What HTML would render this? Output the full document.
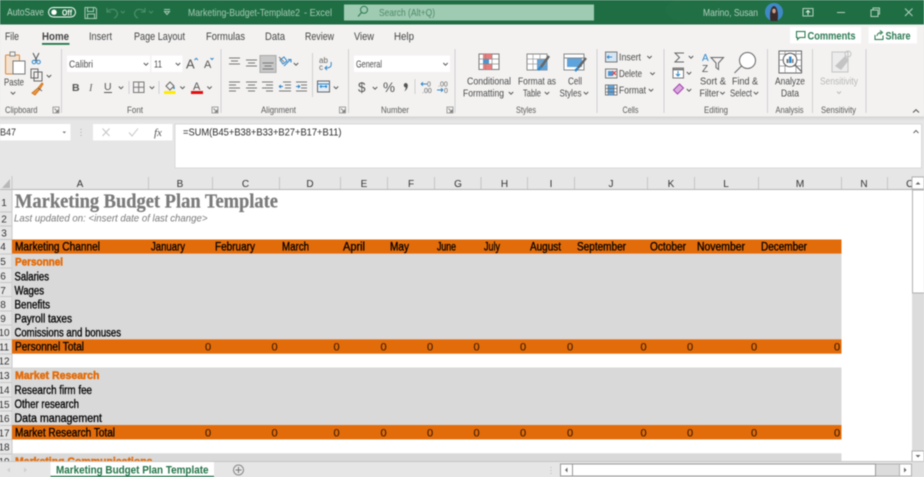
<!DOCTYPE html>
<html lang="en"><head><meta charset="utf-8"><title>Marketing Budget Plan Template</title>
<style>
html,body{margin:0;padding:0;width:924px;height:477px;overflow:hidden;background:#e6e6e6}
svg{display:block;position:absolute;left:0;top:0;filter:blur(.4px)}
text{font-family:"Liberation Sans",sans-serif;font-size:9.5px;fill:#555}
.tb{fill:#b3d0bf;font-size:10.5px}
.tab{font-size:11px;fill:#444}
.gl{font-size:9px;fill:#5a5a5a}
.r{font-size:10.5px;fill:#4a4a4a}
.cell{font-size:11.5px;fill:#000;stroke:#000;stroke-width:.3}
.z{font-size:11px;fill:#3a1c00;text-anchor:middle;stroke:#3a1c00;stroke-width:.12}
.pers{font-size:11px;font-weight:bold;fill:#e36c0a;stroke:#e36c0a;stroke-width:.5}
.ch{font-size:10px;fill:#333;text-anchor:middle}
.rh{font-size:10px;fill:#333;text-anchor:middle}
.ic{fill:none;stroke:#666;stroke-width:1}
.chev{fill:none;stroke:#555;stroke-width:1}
</style></head><body>
<svg width="924" height="477" viewBox="0 0 924 477" xmlns="http://www.w3.org/2000/svg">
<defs>
<path id="c" d="M-2.2-1 0 1.2 2.2-1" class="chev"/>
<linearGradient id="sh" x1="0" x2="0" y1="0" y2="1"><stop offset="0" stop-color="#d2d2d2"/><stop offset="1" stop-color="#e6e6e6"/></linearGradient>
<g id="lau"><path d="M0 0h6v6H0z" fill="none" stroke="#888" stroke-width=".8"/><path d="M1.5 1.5 5 5M5 2.5V5H2.5" fill="none" stroke="#666" stroke-width=".8"/></g>
</defs>

<!-- base -->
<rect width="924" height="477" fill="#e6e6e6"/>

<!-- title bar -->
<rect width="924" height="24.5" fill="#1f6e43"/>
<ellipse cx="740" cy="10" rx="75" ry="20" fill="#236f47" opacity=".6"/>
<text class="tb" x="7" y="15.5" textLength="37" lengthAdjust="spacingAndGlyphs">AutoSave</text>
<rect x="48.5" y="7.5" width="27" height="9.5" rx="4.7" fill="none" stroke="#fff" stroke-width="1"/>
<circle cx="54" cy="12.2" r="2.7" fill="#fff"/>
<text x="62" y="15.3" textLength="10" lengthAdjust="spacingAndGlyphs" style="font-size:8.5px;fill:#fff;font-weight:bold">Off</text>
<path d="M85 7.5h10l1.5 1.5v9.5H85zM87.5 7.5v4h6v-4M87.5 18.500v-4.500h7v4.500" fill="none" stroke="#a9c9b6" stroke-width="1"/>
<path d="M107 8v4h4M107 12c2-3 8-4 10 0 1 2 0 5-3 6" fill="none" stroke="#4f8f6b" stroke-width="1.100"/>
<path d="M120.800 11l2 2 2-2" fill="none" stroke="#4f8f6b"/>
<path d="M145 8v4h-4M145 12c-2-3-8-4-10 0-1 2 0 5 3 6" fill="none" stroke="#4f8f6b" stroke-width="1.100"/>
<path d="M149 11l2 2 2-2" fill="none" stroke="#4f8f6b"/>
<path d="M164 9.500h6M164.500 11.500l2.500 3 2.500-3z" fill="none" stroke="#a9c9b6"/>
<text class="tb" x="188" y="15.800" textLength="112" lengthAdjust="spacingAndGlyphs" style="fill:#a5c8b3">Marketing-Budget-Template2</text>
<text class="tb" x="304" y="15.800" textLength="28" lengthAdjust="spacingAndGlyphs" style="fill:#a5c8b3">-  Excel</text>
<rect x="344" y="4.500" width="250" height="16" fill="#9ecbb2"/>
<circle cx="364" cy="9.800" r="3.500" fill="none" stroke="#2f7a52"/>
<path d="M361.500 12.500 358 16.500" stroke="#2f7a52"/>
<text x="379" y="16" textLength="56" lengthAdjust="spacingAndGlyphs" style="font-size:10.500px;fill:#4f8a69">Search (Alt+Q)</text>
<text class="tb" x="703" y="16" textLength="55" lengthAdjust="spacingAndGlyphs">Marino, Susan</text>
<circle cx="774" cy="12" r="9" fill="#3f8ac6"/>
<path d="M770.500 21c-1-6-.5-14 3.500-15 4 1 4.500 9 3.500 15z" fill="#3a2a2a"/>
<ellipse cx="774" cy="11" rx="1.800" ry="2.400" fill="#c99f8c"/>
<rect x="803" y="8.500" width="10" height="7.500" fill="none" stroke="#b3d0bf"/>
<path d="M808 15v-4M806 12.500l2-2 2 2" fill="none" stroke="#dfeee6"/>
<path d="M837 12.500h8" stroke="#b3d0bf"/>
<path d="M871 10h7v6.500h-7zM873 10V8h6.500v6H878" fill="none" stroke="#b3d0bf"/>
<path d="M905 8.500l7.500 7.500M912.500 8.500 905 16" stroke="#b3d0bf"/>

<!-- tabs + ribbon -->
<rect y="24.500" width="924" height="92" fill="#f3f2f1"/>
<text class="tab" x="5" y="40" textLength="14" lengthAdjust="spacingAndGlyphs">File</text>
<text class="tab" x="42" y="40" textLength="27" lengthAdjust="spacingAndGlyphs" style="font-weight:bold">Home</text>
<rect x="42" y="43" width="27.500" height="1.800" fill="#217346"/>
<text class="tab" x="89" y="40" textLength="23" lengthAdjust="spacingAndGlyphs">Insert</text>
<text class="tab" x="134" y="40" textLength="51" lengthAdjust="spacingAndGlyphs">Page Layout</text>
<text class="tab" x="206" y="40" textLength="39" lengthAdjust="spacingAndGlyphs">Formulas</text>
<text class="tab" x="265" y="40" textLength="20" lengthAdjust="spacingAndGlyphs">Data</text>
<text class="tab" x="305" y="40" textLength="29" lengthAdjust="spacingAndGlyphs">Review</text>
<text class="tab" x="354" y="40" textLength="20" lengthAdjust="spacingAndGlyphs">View</text>
<text class="tab" x="394" y="40" textLength="20" lengthAdjust="spacingAndGlyphs">Help</text>

<rect x="790" y="27" width="71" height="16.500" fill="#fff"/>
<path d="M796.500 31.500h8.500v6h-5.500l-2 2v-2h-1z" fill="none" stroke="#217346"/>
<text x="807.500" y="39.500" textLength="48" lengthAdjust="spacingAndGlyphs" style="font-size:11px;font-weight:bold;fill:#2c7a52">Comments</text>
<rect x="868.500" y="27" width="48.500" height="16.500" fill="#fff"/>
<path d="M875 35v4.500h8v-4M877 36c0-2 2-3.500 4-3.500M880 30.500l2.500 2-2.500 2" fill="none" stroke="#217346"/>
<text x="885.500" y="39.500" textLength="25" lengthAdjust="spacingAndGlyphs" style="font-size:11px;font-weight:bold;fill:#2c7a52">Share</text>

<!-- separators -->
<g stroke="#cfcfcf" stroke-width="1">
<path d="M61.500 49v64M221 49v64M348.500 49v64M455 49v64M597 49v64M664 49v64M767.500 49v64M812.500 49v64M866 49v64"/>
<path d="M312.500 53v44M129 81v13M159 81v13M415 79v15"/>
</g>

<!-- clipboard -->
<rect x="5.500" y="55" width="14" height="19" rx="1" fill="#f3e2cf" stroke="#d98a3d"/>
<rect x="10" y="52" width="5" height="4" fill="#f3f2f1" stroke="#888"/>
<rect x="13" y="61" width="12" height="13" fill="#fff" stroke="#777"/>
<text x="4" y="85.500" textLength="20" lengthAdjust="spacingAndGlyphs" class="r">Paste</text>
<use href="#c" x="13" y="93"/>
<path d="M33 53l4 8M39 53l-4 8" stroke="#555" fill="none"/>
<circle cx="34" cy="62" r="1.800" fill="none" stroke="#2f86c9"/><circle cx="38.500" cy="62" r="1.800" fill="none" stroke="#2f86c9"/>
<path d="M31 69h7v9h-7zM34 72h8v9h-8z" fill="#f3f2f1" stroke="#666"/>
<use href="#c" x="49" y="76"/>
<path d="M32 93l6-5 4-5 1 1-3 5-5 6z" fill="#e79b45" stroke="#d5741a"/>
<path d="M38 88l4 3" stroke="#666"/>
<text class="gl" x="5" y="113" textLength="32.500" lengthAdjust="spacingAndGlyphs">Clipboard</text>
<use href="#lau" x="53" y="107"/>

<!-- font -->
<rect x="67" y="55.500" width="83" height="16.500" fill="#fff"/>
<rect x="151.500" y="55.500" width="31" height="16.500" fill="#fff"/>
<text x="69" y="67.500" textLength="24" lengthAdjust="spacingAndGlyphs" class="r">Calibri</text>
<text x="154" y="67.500" textLength="8" lengthAdjust="spacingAndGlyphs" class="r">11</text>
<use href="#c" x="146" y="64"/><use href="#c" x="178" y="64"/>
<text x="186" y="68.500" style="font-size:13px;fill:#555">A</text>
<path d="M194.500 60l1.700-1.700 1.700 1.700" fill="none" stroke="#2f86c9"/>
<text x="204" y="68" style="font-size:11px;fill:#555">A</text>
<path d="M210.500 58l1.500 1.500 1.500-1.500" fill="none" stroke="#2f86c9"/>
<text x="72" y="91" style="font-size:10.500px;font-weight:bold;fill:#555">B</text>
<text x="89" y="91" style="font-size:10.500px;font-style:italic;fill:#666;font-family:'Liberation Serif',serif">I</text>
<text x="104" y="90" style="font-size:10.500px;fill:#555">U</text><path d="M104 92.500h8" stroke="#555"/>
<use href="#c" x="121" y="87.500"/>
<path d="M133.500 82h10.500v10.500h-10.500zM138.700 82v10.500M133.500 87.200h10.500" fill="none" stroke="#777"/>
<use href="#c" x="152" y="87.500"/>
<path d="M170 82l4 4-4 4-4-4z" fill="none" stroke="#666"/><path d="M174 87v2" stroke="#2f86c9" stroke-width="1.500"/>
<rect x="164" y="91" width="11.500" height="3" fill="#ffeb00"/>
<use href="#c" x="182.500" y="87.500"/>
<text x="193" y="90" style="font-size:11px;fill:#555">A</text>
<rect x="191" y="91" width="12" height="3" fill="#e01010"/>
<use href="#c" x="209.500" y="87.500"/>
<text class="gl" x="127" y="113" textLength="16" lengthAdjust="spacingAndGlyphs">Font</text>
<use href="#lau" x="212" y="107"/>

<!-- alignment -->
<rect x="260" y="55.500" width="16" height="17" fill="#c8c8c8" stroke="#aaa"/>
<g stroke="#777" stroke-width="1.100" fill="none">
<path d="M229 58h11M231 61h7M229 64h11"/>
<path d="M246 60h11M248 63h7M246 66h11"/>
<path d="M262.500 63h11M264.500 66h7M262.500 69h11"/>
<path d="M229 82h11M229 85h7M229 88h11M229 91h7"/>
<path d="M246 82h11M248 85h7M246 88h11M248 91h7"/>
<path d="M262 82h11M266 85h7M262 88h11M266 91h7"/>
<path d="M283 82h8M285 85h6M285 88h6M279 91h12"/>
<path d="M296 82h11M301 85h6M301 88h6M296 91h11"/>
</g>
<path d="M279 86.500h4M279 86.500l2-1.500M279 86.500l2 1.500" stroke="#2f86c9" fill="none"/>
<path d="M296 86.500h4M300 86.500l-2-1.500M300 86.500l-2 1.500" stroke="#2f86c9" fill="none"/>
<path d="M280 60l4-3 3 4-4 3zM284 66l6-6M288 59.500h3v3" fill="none" stroke="#2f86c9"/>
<path d="M279 57l5 5" stroke="#777"/>
<use href="#c" x="296" y="64"/>
<text x="319" y="63" style="font-size:8px;fill:#666">ab</text>
<text x="319" y="70" style="font-size:8px;fill:#666">c</text>
<path d="M331 62c1 5-1 6-6 6M327 66l-2 2 2 2" stroke="#2f86c9" fill="none"/>
<rect x="317.500" y="81" width="12" height="11" fill="#e2eef7" stroke="#666"/>
<path d="M317.500 84h12M320 86.500h7M320 86.500l1.500-1.200M320 86.500l1.500 1.200M327 86.500l-1.500-1.200M327 86.500l-1.500 1.200" stroke="#2f86c9" fill="none"/>
<use href="#c" x="336" y="87.500"/>
<text class="gl" x="261" y="113" textLength="35" lengthAdjust="spacingAndGlyphs">Alignment</text>
<use href="#lau" x="339.500" y="107"/>

<!-- number -->
<rect x="354" y="55.500" width="96" height="16.500" fill="#fff"/>
<text x="356" y="67.500" textLength="26" lengthAdjust="spacingAndGlyphs" class="r">General</text>
<use href="#c" x="445.500" y="64"/>
<text x="358" y="92" style="font-size:13.500px;fill:#555">$</text>
<use href="#c" x="375" y="88"/>
<text x="383" y="92" style="font-size:13.500px;fill:#555" textLength="12" lengthAdjust="spacingAndGlyphs">%</text>
<path d="M405.500 83a2.300 2.300 0 0 1 2.300 2.500c0 2.500-1.300 4.500-3.500 6 .8-1.500 1.400-2.500 1.500-4a2.300 2.300 0 0 1-.3-4.500z" fill="#555"/>
<path d="M421 84h6M421 84l2-1.800M421 84l2 1.800" stroke="#2f86c9" fill="none"/>
<text x="427" y="86.500" style="font-size:7px;fill:#666">0</text>
<text x="422" y="93" style="font-size:7px;fill:#666">.00</text>
<text x="438" y="86.500" style="font-size:7px;fill:#666">.00</text>
<path d="M437 90h6M443 90l-2-1.800M443 90l-2 1.800" stroke="#2f86c9" fill="none"/>
<text x="444" y="93" style="font-size:7px;fill:#666">0</text>
<text class="gl" x="381" y="113" textLength="28" lengthAdjust="spacingAndGlyphs">Number</text>
<use href="#lau" x="447" y="107"/>

<!-- styles -->
<g>
<rect x="479" y="54" width="20" height="15.500" fill="#fff" stroke="#777"/>
<rect x="483" y="54" width="9" height="5" fill="#ee7b7b"/>
<rect x="483" y="59" width="6" height="5" fill="#4a94d4"/>
<rect x="483" y="64" width="9" height="5.500" fill="#ee7b7b"/>
<path d="M485.500 54v15.500M492 54v15.500M479 59h20M479 64h20" stroke="#888" stroke-width=".7" fill="none"/>
</g>
<text class="r" x="467" y="84.500" textLength="44" lengthAdjust="spacingAndGlyphs">Conditional</text>
<text class="r" x="463" y="96.500" textLength="41" lengthAdjust="spacingAndGlyphs">Formatting</text>
<use href="#c" x="511" y="93"/>
<rect x="527" y="54" width="20" height="16" fill="#fff" stroke="#888"/>
<rect x="537" y="59" width="10" height="11" fill="#5fa3dc"/>
<path d="M527 59h20M527 64h20M533 54v16M540 54v16" stroke="#999" stroke-width=".7"/>
<path d="M549 56l-8 11" stroke="#666" stroke-width="2.500"/><path d="M541 67l-3 3" stroke="#2f86c9" stroke-width="2.500"/>
<text class="r" x="518" y="84.500" textLength="38" lengthAdjust="spacingAndGlyphs">Format as</text>
<text class="r" x="523" y="96.500" textLength="18" lengthAdjust="spacingAndGlyphs">Table</text>
<use href="#c" x="547" y="93"/>
<rect x="564" y="54" width="20" height="16" fill="#fff" stroke="#888"/>
<rect x="567" y="58" width="15" height="9" fill="#5fa3dc"/>
<path d="M564 58h20" stroke="#888"/>
<path d="M586 58l-8 10" stroke="#666" stroke-width="2.500"/><path d="M578 68l-3 3" stroke="#2f86c9" stroke-width="2.500"/>
<text class="r" x="568" y="84.500" textLength="14" lengthAdjust="spacingAndGlyphs">Cell</text>
<text class="r" x="559.500" y="96.500" textLength="22" lengthAdjust="spacingAndGlyphs">Styles</text>
<use href="#c" x="586" y="93"/>
<text class="gl" x="516" y="113" textLength="20" lengthAdjust="spacingAndGlyphs">Styles</text>

<!-- cells -->
<rect x="605.500" y="52" width="11.500" height="10" fill="#d5e6f4" stroke="#777"/>
<path d="M607 57h5M607 57l2-1.500M607 57l2 1.500" stroke="#2f86c9" fill="none"/>
<text class="r" x="619" y="60.500" textLength="22" lengthAdjust="spacingAndGlyphs">Insert</text>
<use href="#c" x="649.500" y="57"/>
<rect x="605.500" y="69" width="11.500" height="9" fill="#eef0f2" stroke="#777"/>
<rect x="608" y="71" width="5" height="5" fill="#4a94d4"/>
<path d="M612.500 71l3.500 4M616 71l-3.500 4" stroke="#d93a3a"/>
<text class="r" x="619" y="77" textLength="23" lengthAdjust="spacingAndGlyphs">Delete</text>
<use href="#c" x="652.500" y="73.500"/>
<rect x="605.500" y="85" width="11.500" height="10" fill="#fff" stroke="#777"/>
<rect x="608" y="85" width="6" height="10" fill="#5fa3dc"/>
<path d="M605.500 88.500h11.500M605.500 92h11.500M608 85v10M614 85v10" stroke="#666" stroke-width=".7"/>
<text class="r" x="619" y="93.500" textLength="27" lengthAdjust="spacingAndGlyphs">Format</text>
<use href="#c" x="651" y="90"/>
<text class="gl" x="622.500" y="113" textLength="16" lengthAdjust="spacingAndGlyphs">Cells</text>

<!-- editing -->
<path d="M684 53h-9l4.500 4.500-4.500 4.500h9" fill="none" stroke="#666" stroke-width="1"/>
<use href="#c" x="691" y="57"/>
<rect x="673" y="68" width="10.500" height="10" fill="#fff" stroke="#777"/><path d="M673 69.500h10.500" stroke="#666" stroke-width="1.500"/>
<path d="M678 71v5M676 74l2 2 2-2" stroke="#2f86c9" fill="none"/>
<use href="#c" x="689" y="73"/>
<path d="M673.500 90l6-6 4 4-6 6z" fill="#d9a9dc" stroke="#a33fb0"/>
<use href="#c" x="689" y="90"/>
<text x="702" y="61" style="font-size:10px;fill:#2f86c9">A</text>
<text x="702" y="72" style="font-size:10px;fill:#555">Z</text>
<path d="M711 57.500h12.500l-5 5.500v6.500l-2.500-2V63z" fill="none" stroke="#666"/>
<text class="r" x="700" y="84.500" textLength="26" lengthAdjust="spacingAndGlyphs">Sort &amp;</text>
<text class="r" x="699.500" y="96.500" textLength="19.500" lengthAdjust="spacingAndGlyphs">Filter</text>
<use href="#c" x="722.500" y="93"/>
<circle cx="747.500" cy="60.500" r="8" fill="#fff" stroke="#666"/>
<path d="M741.500 66l-7 7" stroke="#666"/>
<text class="r" x="732" y="84.500" textLength="26" lengthAdjust="spacingAndGlyphs">Find &amp;</text>
<text class="r" x="730" y="96.500" textLength="22" lengthAdjust="spacingAndGlyphs">Select</text>
<use href="#c" x="756" y="93"/>
<text class="gl" x="704" y="113" textLength="24" lengthAdjust="spacingAndGlyphs">Editing</text>

<!-- analyze -->
<rect x="779" y="51" width="22.500" height="22" fill="#fff" stroke="#666"/>
<path d="M779 54h22.500M779 60h22.500M779 66h22.500M785 51v22M796 51v22" stroke="#888" stroke-width=".7"/>
<circle cx="790" cy="60" r="6.800" fill="#fff" stroke="#555"/>
<rect x="786.500" y="59" width="2" height="4" fill="#777"/><rect x="789" y="56.500" width="2.500" height="6.500" fill="#2f86c9"/><rect x="792" y="59" width="1.500" height="4" fill="#777"/>
<path d="M795 65l7 7" stroke="#666" stroke-width="1.200"/>
<text class="r" x="775" y="84.500" textLength="30" lengthAdjust="spacingAndGlyphs">Analyze</text>
<text class="r" x="781" y="96.500" textLength="18" lengthAdjust="spacingAndGlyphs">Data</text>
<text class="gl" x="775.500" y="113" textLength="28" lengthAdjust="spacingAndGlyphs">Analysis</text>

<!-- sensitivity -->
<path d="M832 52h16v20h-16z" fill="#ececec" stroke="#c4c4c4"/>
<path d="M835 66l10-10 4 4-8 10z" fill="#c4c4c4"/>
<circle cx="848" cy="54" r="3" fill="none" stroke="#c4c4c4"/>
<text x="820" y="84.500" textLength="38" lengthAdjust="spacingAndGlyphs" style="font-size:10.500px;fill:#b8b8b8">Sensitivity</text>
<path d="M837 91.500l2 2 2-2" fill="none" stroke="#bbb"/>
<text class="gl" x="821" y="113" textLength="35" lengthAdjust="spacingAndGlyphs">Sensitivity</text>
<path d="M913 112.500l3-2.800 3 2.800" fill="none" stroke="#555"/>

<!-- ribbon shadow -->
<rect y="116.500" width="924" height="4" fill="url(#sh)"/>

<!-- formula bar -->
<rect x="0" y="124" width="70.500" height="16.500" fill="#fff"/>
<text x="0" y="135.500" textLength="16" lengthAdjust="spacingAndGlyphs" style="font-size:10.500px;fill:#333">B47</text>
<path d="M62.500 131.500h3.500l-1.700 2z" fill="#777"/>
<path d="M81 129v.8M81 132v.8M81 135v.8" stroke="#999"/>
<rect x="93" y="124" width="79.500" height="16.500" fill="#fff"/>
<path d="M102.500 128.500l7 7.500M109.500 128.500l-7 7.500" stroke="#c4c4c4"/>
<path d="M129 132.500l3 3.500 6-7.500" stroke="#c4c4c4" fill="none"/>
<text x="154" y="136" style="font-size:11px;font-style:italic;fill:#555;font-family:'Liberation Serif',serif">fx</text>
<rect x="175" y="124" width="746.500" height="44" fill="#fff" stroke="#d4d4d4" stroke-width=".8"/>
<text x="183" y="135.500" textLength="158.500" lengthAdjust="spacingAndGlyphs" style="font-size:10.500px;fill:#2a2a2a">=SUM(B45+B38+B33+B27+B17+B11)</text>
<path d="M913.500 133l2.500-2.500 2.500 2.500" fill="none" stroke="#666"/>

<!-- grid -->
<rect x="12" y="190" width="900" height="272" fill="#fff"/>
<rect x="0" y="176" width="912" height="14" fill="#e6e6e6"/>
<rect x="0" y="189" width="912" height="1" fill="#b5b5b5"/>
<rect x="11.500" y="176" width="1" height="286" fill="#c8c8c8"/>
<path d="M10 179v9H2z" fill="#b8b8b8"/>
<g stroke="#c6c6c6" stroke-width="1">
<path d="M148.500 177v12M212.500 177v12M279.500 177v12M340.500 177v12M387.500 177v12M434.500 177v12M481 177v12M527.500 177v12M574.500 177v12M647.500 177v12M694.500 177v12M758.500 177v12M841.500 177v12M887.500 177v12"/>
<path d="M0 212h12M0 226h12M0 239.500h12M0 254h12M0 268h12M0 282.500h12M0 296.500h12M0 311h12M0 325h12M0 339.500h12M0 354h12M0 368h12M0 382.500h12M0 397h12M0 411h12M0 425.500h12M0 439.500h12M0 454h12"/>
</g>
<text class="ch" x="80" y="187">A</text><text class="ch" x="180" y="187">B</text><text class="ch" x="245.500" y="187">C</text><text class="ch" x="310" y="187">D</text><text class="ch" x="364" y="187">E</text><text class="ch" x="411" y="187">F</text><text class="ch" x="458" y="187">G</text><text class="ch" x="504.500" y="187">H</text><text class="ch" x="551" y="187">I</text><text class="ch" x="611" y="187">J</text><text class="ch" x="671" y="187">K</text><text class="ch" x="726" y="187">L</text><text class="ch" x="800" y="187">M</text><text class="ch" x="864" y="187">N</text><text class="ch" x="910" y="187">O</text>
<text class="rh" x="4" y="206">1</text><text class="rh" x="4" y="222.500">2</text><text class="rh" x="4" y="236.500">3</text><text class="rh" x="3" y="250">4</text><text class="rh" x="3" y="265">5</text><text class="rh" x="3" y="279.500">6</text><text class="rh" x="3" y="294">7</text><text class="rh" x="3" y="308">8</text><text class="rh" x="3" y="322">9</text><text class="rh" x="4" y="336">10</text><text class="rh" x="4" y="350.500">11</text><text class="rh" x="4" y="364.500">12</text><text class="rh" x="4" y="379">13</text><text class="rh" x="4" y="393.500">14</text><text class="rh" x="4" y="408">15</text><text class="rh" x="4" y="422">16</text><text class="rh" x="4" y="436.500">17</text><text class="rh" x="4" y="450.500">18</text><text class="rh" x="4" y="465">19</text>

<!-- bands -->
<rect x="12" y="239.500" width="829.500" height="14.300" fill="#e36c0a"/>
<rect x="12" y="253.800" width="829.500" height="85.500" fill="#d9d9d9"/>
<rect x="12" y="339.300" width="829.500" height="14.400" fill="#e36c0a"/>
<rect x="12" y="367.500" width="829.500" height="57.500" fill="#d9d9d9"/>
<rect x="12" y="425" width="829.500" height="14.400" fill="#e36c0a"/>
<rect x="12" y="453.300" width="829.500" height="9" fill="#d9d9d9"/>

<text x="15" y="207.500" textLength="263" lengthAdjust="spacingAndGlyphs" style="font-family:'Liberation Serif',serif;font-size:20px;font-weight:bold;fill:#7a7a7a;stroke:#7a7a7a;stroke-width:.25">Marketing Budget Plan Template</text>
<text x="14" y="221.500" textLength="193.500" lengthAdjust="spacingAndGlyphs" style="font-size:10.500px;font-style:italic;fill:#787878">Last updated on: &lt;insert date of last change&gt;</text>

<text class="cell" x="15" y="250.500" textLength="85" lengthAdjust="spacingAndGlyphs">Marketing Channel</text>
<text class="cell" x="151" y="250.500" textLength="34" lengthAdjust="spacingAndGlyphs">January</text>
<text class="cell" x="215" y="250.500" textLength="40" lengthAdjust="spacingAndGlyphs">February</text>
<text class="cell" x="282" y="250.500" textLength="27" lengthAdjust="spacingAndGlyphs">March</text>
<text class="cell" x="343" y="250.500" textLength="22" lengthAdjust="spacingAndGlyphs">April</text>
<text class="cell" x="390" y="250.500" textLength="19" lengthAdjust="spacingAndGlyphs">May</text>
<text class="cell" x="437" y="250.500" textLength="19" lengthAdjust="spacingAndGlyphs">June</text>
<text class="cell" x="484" y="250.500" textLength="16" lengthAdjust="spacingAndGlyphs">July</text>
<text class="cell" x="530" y="250.500" textLength="31" lengthAdjust="spacingAndGlyphs">August</text>
<text class="cell" x="577" y="250.500" textLength="49" lengthAdjust="spacingAndGlyphs">September</text>
<text class="cell" x="650" y="250.500" textLength="36" lengthAdjust="spacingAndGlyphs">October</text>
<text class="cell" x="697" y="250.500" textLength="48" lengthAdjust="spacingAndGlyphs">November</text>
<text class="cell" x="761" y="250.500" textLength="46" lengthAdjust="spacingAndGlyphs">December</text>

<text class="pers" x="15" y="265.500" textLength="48" lengthAdjust="spacingAndGlyphs">Personnel</text>
<text class="cell" x="14.500" y="280.500" textLength="34.500" lengthAdjust="spacingAndGlyphs">Salaries</text>
<text class="cell" x="14.500" y="294.500" textLength="29.500" lengthAdjust="spacingAndGlyphs">Wages</text>
<text class="cell" x="14.500" y="308.500" textLength="35.500" lengthAdjust="spacingAndGlyphs">Benefits</text>
<text class="cell" x="14.500" y="322.500" textLength="57.500" lengthAdjust="spacingAndGlyphs">Payroll taxes</text>
<text class="cell" x="14.500" y="336.500" textLength="106.500" lengthAdjust="spacingAndGlyphs">Comissions and bonuses</text>
<text class="cell" x="15" y="350.500" textLength="69" lengthAdjust="spacingAndGlyphs">Personnel Total</text>
<text class="pers" x="15" y="379" textLength="84.500" lengthAdjust="spacingAndGlyphs">Market Research</text>
<text class="cell" x="14.500" y="394" textLength="77.500" lengthAdjust="spacingAndGlyphs">Research firm fee</text>
<text class="cell" x="14.500" y="408" textLength="64.500" lengthAdjust="spacingAndGlyphs">Other research</text>
<text class="cell" x="14.500" y="422" textLength="87.500" lengthAdjust="spacingAndGlyphs">Data management</text>
<text class="cell" x="15" y="436.500" textLength="100" lengthAdjust="spacingAndGlyphs">Market Research Total</text>
<text class="pers" x="15" y="465" textLength="137.500" lengthAdjust="spacingAndGlyphs">Marketing Communications</text>

<text class="z" x="208" y="350.500">0</text><text class="z" x="274.500" y="350.500">0</text><text class="z" x="336.500" y="350.500">0</text><text class="z" x="383.500" y="350.500">0</text><text class="z" x="430" y="350.500">0</text><text class="z" x="476.500" y="350.500">0</text><text class="z" x="523" y="350.500">0</text><text class="z" x="570" y="350.500">0</text><text class="z" x="643.500" y="350.500">0</text><text class="z" x="690" y="350.500">0</text><text class="z" x="754" y="350.500">0</text><text class="z" x="837" y="350.500">0</text>
<text class="z" x="208" y="436.500">0</text><text class="z" x="274.500" y="436.500">0</text><text class="z" x="336.500" y="436.500">0</text><text class="z" x="383.500" y="436.500">0</text><text class="z" x="430" y="436.500">0</text><text class="z" x="476.500" y="436.500">0</text><text class="z" x="523" y="436.500">0</text><text class="z" x="570" y="436.500">0</text><text class="z" x="643.500" y="436.500">0</text><text class="z" x="690" y="436.500">0</text><text class="z" x="754" y="436.500">0</text><text class="z" x="837" y="436.500">0</text>

<!-- vertical scrollbar -->
<rect x="912" y="176" width="12" height="286" fill="#dcdcdc"/>
<rect x="912" y="177" width="12" height="12" fill="#fff" stroke="#b0b0b0"/>
<path d="M915.500 184.500l2.500-2.500 2.500 2.500z" fill="#666"/>
<rect x="912.500" y="190" width="12" height="103" fill="#fff" stroke="#b0b0b0"/>
<rect x="912" y="451" width="12" height="11" fill="#fff" stroke="#b0b0b0"/>
<path d="M915.500 455l2.500 2.500 2.500-2.500z" fill="#666"/>

<!-- sheet tabs -->
<rect y="461.500" width="924" height="15.500" fill="#e6e6e6"/>
<rect y="461" width="924" height="1" fill="#c6c6c6"/>
<path d="M10 467.500l-3 2.500 3 2.500z" fill="#cfcfcf"/><path d="M24 467.500l3 2.500-3 2.500z" fill="#cfcfcf"/>
<rect x="50.500" y="462" width="163.500" height="15" fill="#fff"/>
<rect x="50.500" y="475.800" width="163.500" height="1.200" fill="#217346"/>
<text x="56" y="473.500" textLength="152.500" lengthAdjust="spacingAndGlyphs" style="font-size:11px;font-weight:bold;fill:#217346">Marketing Budget Plan Template</text>
<circle cx="238.500" cy="470" r="5" fill="none" stroke="#888"/>
<path d="M235.500 470h6M238.500 467v6" stroke="#777"/>
<path d="M551 467v.8M551 470v.8M551 473v.8" stroke="#aaa"/>
<rect x="560.500" y="464" width="351" height="12" fill="#dcdcdc" stroke="#b0b0b0"/>
<rect x="560.500" y="464" width="12" height="12" fill="#fff" stroke="#999"/>
<path d="M567.500 467.500l-2.500 2.500 2.500 2.500z" fill="#666"/>
<rect x="572.500" y="464" width="303" height="12" fill="#fff" stroke="#999"/>
<rect x="899.500" y="464" width="12" height="12" fill="#fff" stroke="#b0b0b0"/>
<path d="M904 467.500l2.500 2.500-2.500 2.500z" fill="#666"/>
<rect x="912" y="462" width="12" height="15" fill="#e0e0e0"/>
</svg>
</body></html>
